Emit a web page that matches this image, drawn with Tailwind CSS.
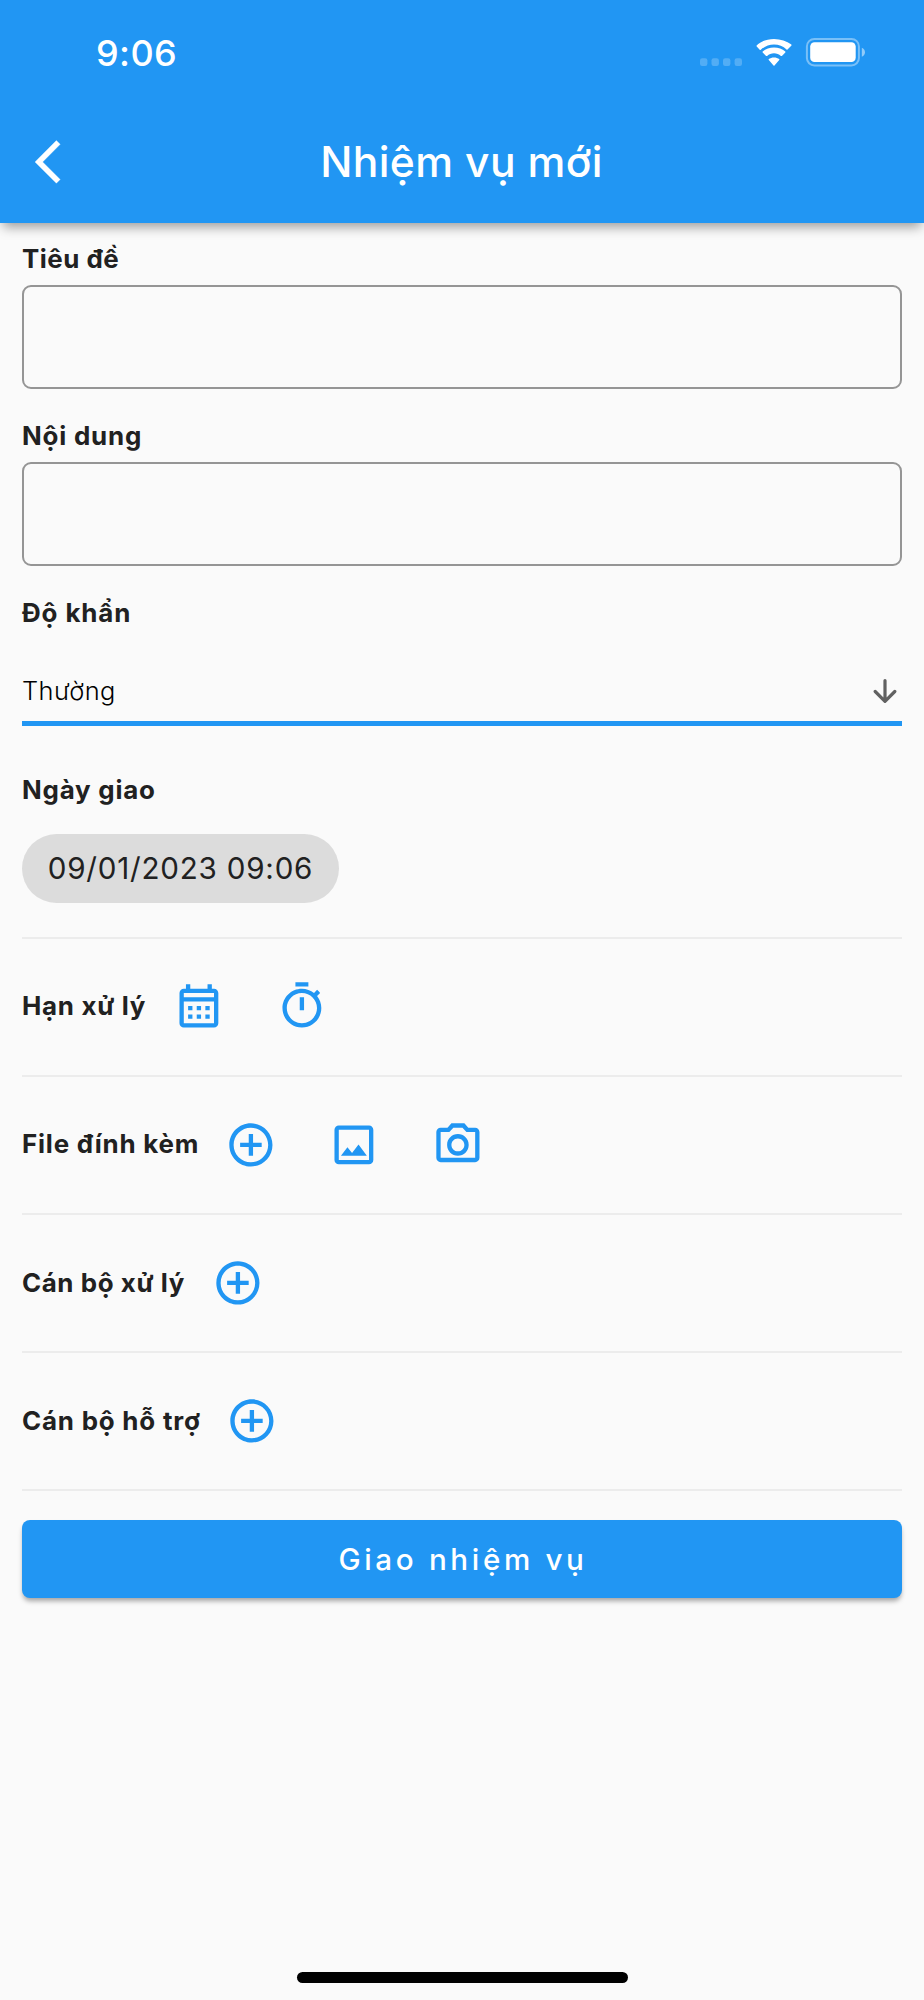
<!DOCTYPE html>
<html lang="vi">
<head>
<meta charset="utf-8">
<title>Nhiệm vụ mới</title>
<script src="https://cdn.jsdelivr.net/npm/@tailwindcss/browser@4"></script>
</head>
<body class="bg-[#fafafa] font-['Inter','Roboto',sans-serif] text-[#212121]">
<svg class="hidden">
  <symbol id="plus" viewBox="0 0 24 24"><path d="M13 7h-2v4H7v2h4v4h2v-4h4v-2h-4V7zm-1-5C6.48 2 2 6.48 2 12s4.48 10 10 10 10-4.48 10-10S17.52 2 12 2zm0 18c-4.41 0-8-3.59-8-8s3.59-8 8-8 8 3.59 8 8-3.59 8-8 8z"/></symbol>
</svg>
<div class="flex h-[2000px] w-[924px] flex-col">
  <header class="relative flex h-[222.5px] flex-none flex-col bg-[#2196f3] text-white shadow-[0_7px_11px_-3px_rgba(0,0,0,0.38)]">
    <div class="flex h-[105px] items-center justify-between pr-[59px] pl-[96px]">
      <span class="text-[36px] leading-none font-medium tracking-[0.4px]">9:06</span>
      <svg class="mb-[1px] h-[30px] w-[166px]" viewBox="699 37 166 30" fill="#fff">
        <g opacity=".22"><rect x="700" y="58.3" width="7.4" height="7.6" rx="2.2"/><rect x="711.5" y="58.3" width="7.4" height="7.6" rx="2.2"/><rect x="723" y="58.3" width="7.4" height="7.6" rx="2.2"/><rect x="734.6" y="58.3" width="7.4" height="7.6" rx="2.2"/></g>
        <path d="M774 44.500c4.800 0 9.200 1.800 12.500 4.900.3.300.7.300 1 0l4-4-.1-.9C786.700 41 780.600 38.900 774 38.900s-12.700 2.100-17.400 6.500l-.1.900 3.200 3.500c.4.300.8.300 1.100 0 3.800-3.500 8.400-5.300 13.200-5.300z"/>
        <path d="M774 53.300c2.600 0 5 .9 6.900 2.600.3.300.7.300 1 0l3.400-3.400c.3-.3.300-.6 0-.9-3-2.500-7-4-11.300-4s-8.300 1.500-11.300 4c-.3.300-.3.600 0 .9l3.400 3.400c.3.300.7.300 1 0 1.900-1.700 4.300-2.600 6.900-2.600z"/>
        <path d="M779.200 60.100c.4-.4.300-.7 0-1-1.400-1.100-3.200-1.700-5.200-1.700s-3.800.6-5.200 1.700c-.3.300-.4.600 0 1l4.700 5.300c.3.300.7.300 1 0z"/>
        <rect x="806.900" y="38.900" width="52" height="26.600" rx="7.500" fill="none" stroke="#fff" stroke-opacity=".4" stroke-width="2"/>
        <rect x="810.200" y="42.300" width="45.500" height="19.700" rx="4.300"/>
        <path d="M861.800 47.800c2 .8 3.200 2.500 3.200 4.500s-1.200 3.700-3.200 4.500z" opacity=".5"/>
      </svg>
    </div>
    <div class="grid h-[114px] grid-cols-[52px_1fr_52px] items-center px-[35px]">
      <svg class="h-[51.8px] w-[51.8px]" viewBox="0 0 24 24" fill="#fff" stroke="#fff" stroke-width=".15"><path d="M11.670 3.870L9.900 2.100 0 12l9.900 9.900 1.770-1.770L3.540 12z"/></svg>
      <h1 class="-ml-[1px] text-center text-[42.600px] leading-none font-medium tracking-[0.35px]">Nhiệm vụ mới</h1>
    </div>
  </header>

  <main class="flex flex-col px-[22px]">
    <label class="mt-[20px] h-[32px] text-[25.900px] leading-[32px] font-bold tracking-[0.5px]">Tiêu đề</label>
    <div class="mt-[10.500px] h-[104px] rounded-[9px] border-2 border-[#959595]"></div>
    <label class="mt-[31px] h-[32px] text-[25.900px] leading-[32px] font-bold tracking-[0.8px]">Nội dung</label>
    <div class="mt-[10px] h-[104px] rounded-[9px] border-2 border-[#959595]"></div>
    <label class="mt-[31px] h-[32px] text-[25.900px] leading-[32px] font-bold tracking-[0.9px]">Độ khẩn</label>
    <div class="mt-[32px] flex h-[65px] items-start justify-between border-b-[5px] border-[#2196f3] pr-[5px] text-black">
      <span class="pt-[14px] text-[25.400px] leading-[32px] font-[350] tracking-[0.45px]">Thường</span>
      <svg class="mt-[17px] h-[26px] w-[24px]" viewBox="0 0 24 26" fill="none" stroke="#616161" stroke-width="3.200" stroke-linecap="round" stroke-linejoin="round"><path d="M12 2.500V23M2.200 13.500L12 23.300l9.800-9.800"/></svg>
    </div>
    <label class="mt-[48px] h-[32px] text-[25.900px] leading-[32px] font-bold tracking-[0.78px]">Ngày giao</label>
    <div class="mt-[27.500px] flex h-[69px] w-[317px] items-center justify-center rounded-full bg-[#dcdcdc] text-[29.600px] tracking-[0.78px]">09/01/2023 09:06</div>

    <div class="mt-[34px] flex h-[138.200px] items-center border-t-2 border-[#ececec] pb-[1px]">
      <span class="w-[125px] text-[25.900px] font-bold tracking-[0.7px] whitespace-nowrap">Hạn xử lý</span>
      <span class="flex w-[103.600px] justify-center"><svg class="size-[51.800px]" viewBox="0 0 24 24" fill="#2196f3"><path d="M19 4h-1V2h-2v2H8V2H6v2H5c-1.110 0-1.990.9-1.990 2L3 20c0 1.100.89 2 2 2h14c1.100 0 2-.9 2-2V6c0-1.100-.9-2-2-2zm0 16H5V10h14v10zm0-12H5V6h14v2zM9 14H7v-2h2v2zm4 0h-2v-2h2v2zm4 0h-2v-2h2v2zm-8 4H7v-2h2v2zm4 0h-2v-2h2v2zm4 0h-2v-2h2v2z"/></svg></span>
      <span class="flex w-[103.600px] justify-center"><svg class="size-[51.800px]" viewBox="0 0 24 24" fill="#2196f3"><path d="M9 1h6v2H9zM11 8h2v6h-2zM19.030 7.390l1.420-1.420c-.43-.51-.9-.99-1.410-1.410l-1.420 1.420C16.070 4.740 14.120 4 12 4c-4.970 0-9 4.030-9 9s4.020 9 9 9 9-4.030 9-9c0-2.120-.74-4.070-1.970-5.610zM12 20c-3.870 0-7-3.130-7-7s3.130-7 7-7 7 3.130 7 7-3.130 7-7 7z"/></svg></span>
    </div>
    <div class="flex h-[138.200px] items-center border-t-2 border-[#ececec]">
      <span class="w-[176.700px] text-[25.900px] font-bold tracking-[0.8px] whitespace-nowrap">File đính kèm</span>
      <span class="flex w-[103.600px] justify-center"><svg class="size-[51.800px]" fill="#2196f3"><use href="#plus"/></svg></span>
      <span class="flex w-[103.600px] justify-center"><svg class="size-[51.800px]" viewBox="0 0 24 24" fill="#2196f3"><path d="M19 5v14H5V5h14m0-2H5c-1.100 0-2 .9-2 2v14c0 1.100.9 2 2 2h14c1.100 0 2-.9 2-2V5c0-1.100-.9-2-2-2zm-4.860 8.860l-3 3.870L9 13.140 6 17h12l-3.860-5.140z"/></svg></span>
      <span class="flex w-[103.600px] justify-center"><svg class="size-[51.800px]" viewBox="0 0 24 24" fill="#2196f3"><path d="M14.120 4l1.830 2H20v12H4V6h4.050l1.830-2h4.240M15 2H9L7.170 4H4c-1.100 0-2 .9-2 2v12c0 1.100.9 2 2 2h16c1.100 0 2-.9 2-2V6c0-1.100-.9-2-2-2h-3.170L15 2zm-3 7c1.650 0 3 1.350 3 3s-1.350 3-3 3-3-1.350-3-3 1.350-3 3-3m0-2c-2.760 0-5 2.240-5 5s2.240 5 5 5 5-2.240 5-5-2.240-5-5-5z"/></svg></span>
    </div>
    <div class="flex h-[138.200px] items-center border-t-2 border-[#ececec]">
      <span class="w-[163.700px] text-[25.900px] font-bold tracking-[0.58px] whitespace-nowrap">Cán bộ xử lý</span>
      <span class="flex w-[103.600px] justify-center"><svg class="size-[51.800px]" fill="#2196f3"><use href="#plus"/></svg></span>
    </div>
    <div class="flex h-[140.200px] items-center border-y-2 border-[#ececec]">
      <span class="w-[178.600px] text-[25.900px] font-bold tracking-[0.8px] whitespace-nowrap">Cán bộ hỗ trợ</span>
      <span class="flex w-[103.600px] justify-center"><svg class="size-[51.800px]" fill="#2196f3"><use href="#plus"/></svg></span>
    </div>
    <button class="mt-[28.500px] h-[78px] rounded-[8px] bg-[#2196f3] pl-[2px] text-[29.600px] font-medium tracking-[3.65px] text-white shadow-[0_4px_5px_-1px_rgba(0,0,0,0.35)]">Giao nhiệm vụ</button>
  </main>
  <div class="mx-auto mt-auto mb-[17px] h-[11px] w-[331px] flex-none rounded-full bg-black"></div>
</div>
</body>
</html>
